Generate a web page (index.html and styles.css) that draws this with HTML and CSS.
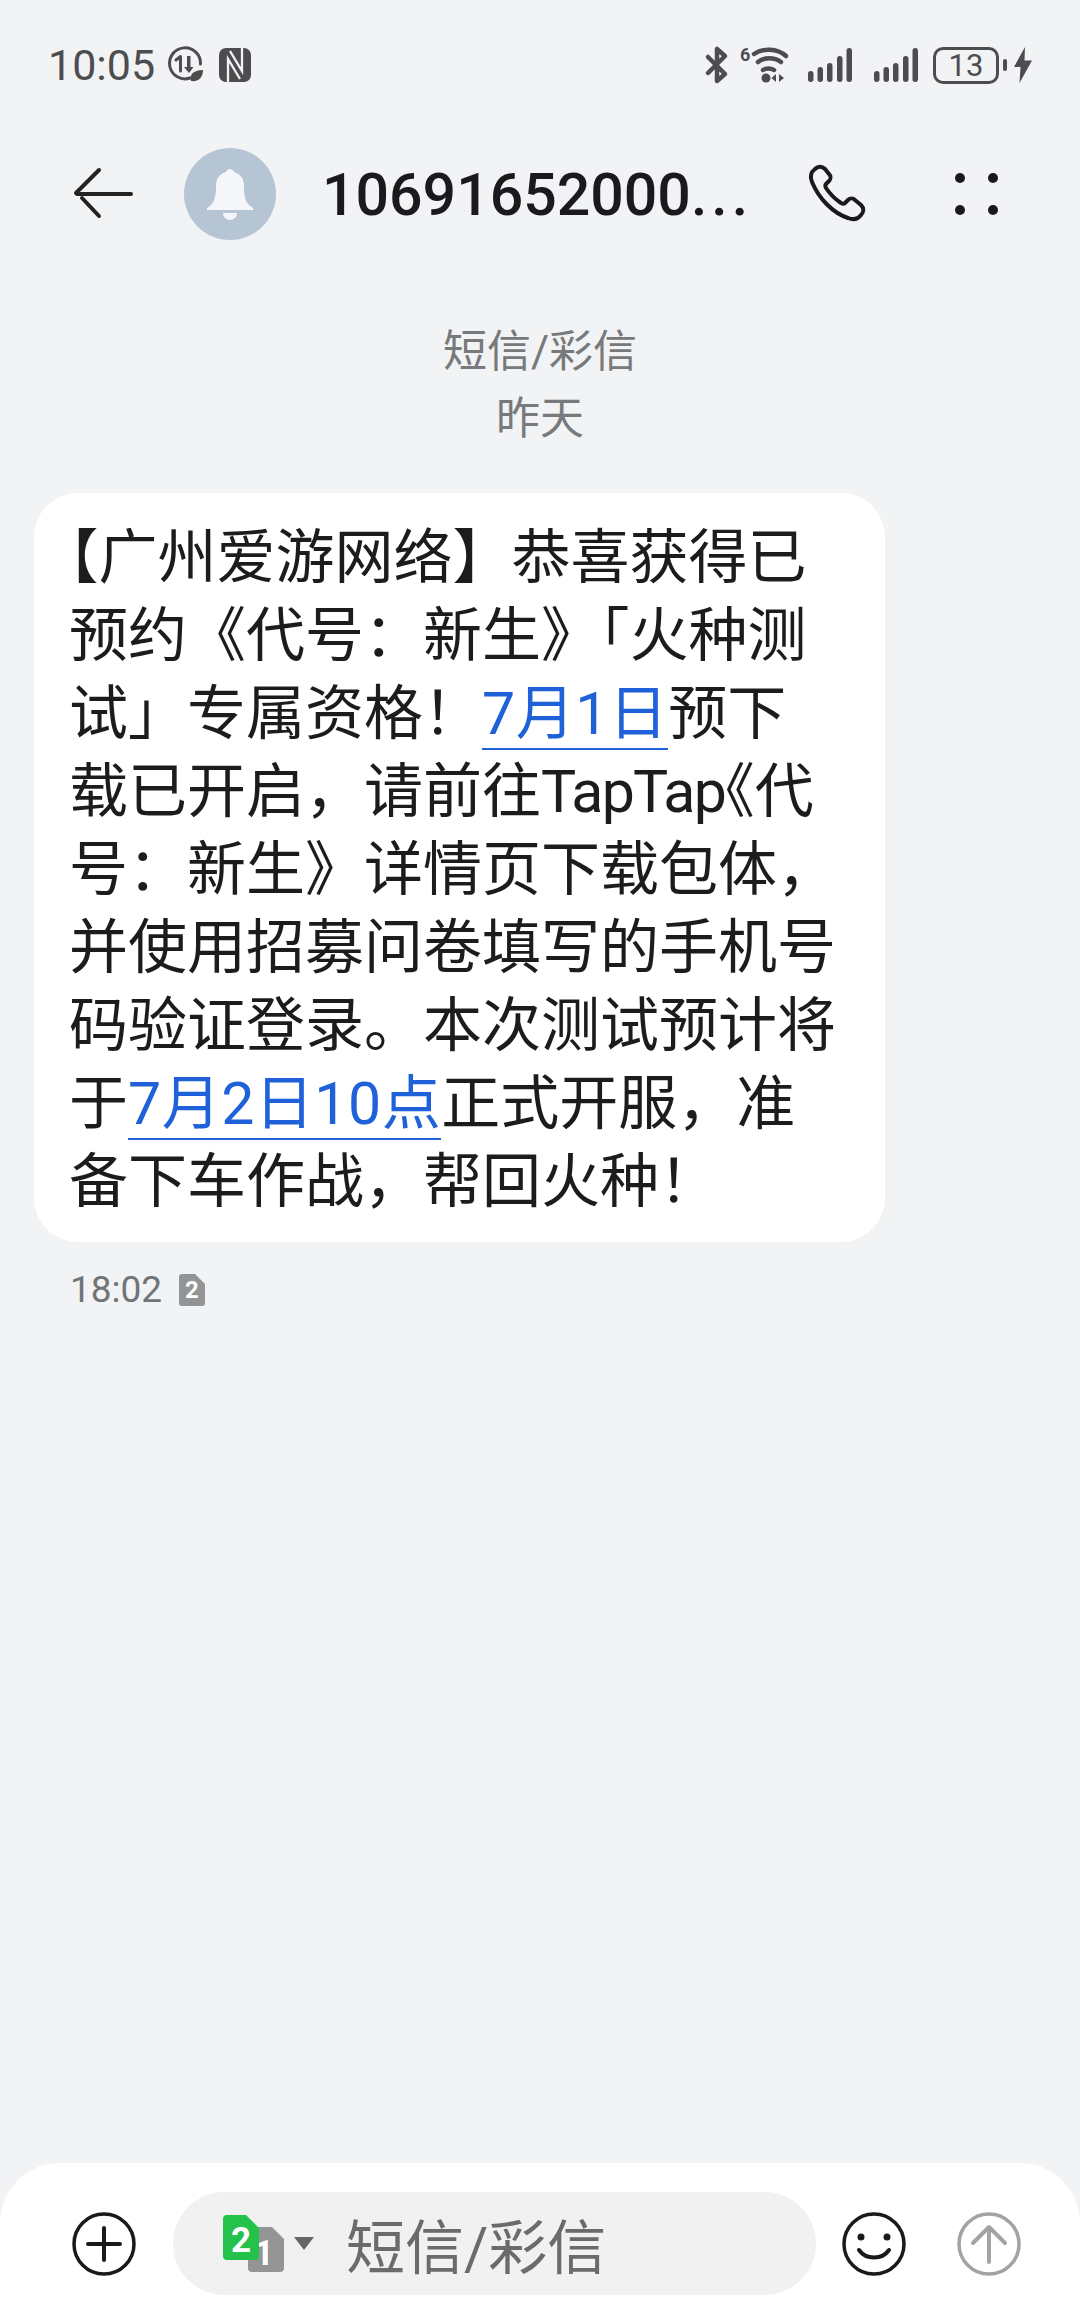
FILE: index.html
```html
<!DOCTYPE html>
<html lang="zh-CN">
<head>
<meta charset="UTF-8">
<meta name="viewport" content="width=device-width, initial-scale=1.0">
<link rel="stylesheet" href="styles.css">
<title>短信/彩信</title>
</head>
<body>
  <div class="status-bar">
    <div class="status-left">
      <span class="clock">10:05</span>
      <svg class="ic-data" viewBox="0 0 36 36" width="36" height="36">
        <path d="M23 31A15.500 15.500 0 1 1 33.500 17" fill="none" stroke="#4d4d4f" stroke-width="3" stroke-linecap="round"/>
        <path d="M9 13l4.500-3.500V24" fill="none" stroke="#4d4d4f" stroke-width="3" stroke-linecap="round" stroke-linejoin="round"/>
        <path d="M20 9v11h-3l5 6 4.500-6h-3V9z" fill="#4d4d4f"/>
        <path d="M24 34c-2-6 2-11 12-11 0 7-4 12-12 11z" fill="#4d4d4f"/>
      </svg>
      <svg class="ic-nfc" viewBox="0 0 32 34" width="32" height="34">
        <rect width="32" height="34" rx="7" fill="#4d4d4f"/>
        <path d="M9 34V11l12 20M23 0v23L11 3" fill="none" stroke="#f1f3f5" stroke-width="2.300"/>
      </svg>
    </div>
    <div class="status-right">
      <svg class="ic-bt" viewBox="0 0 24 38" width="24" height="38">
        <path d="M3 27L20 10 12 3v32l8-7-17-17" fill="none" stroke="#4d4d4f" stroke-width="4.500" stroke-linecap="round" stroke-linejoin="round"/>
      </svg>
      <svg class="ic-wifi" viewBox="0 0 50 38" width="50" height="38">
        <text x="2" y="15" class="wifi-six">6</text>
        <path d="M16 8C25 2 39 2 48 10" fill="none" stroke="#4d4d4f" stroke-width="4.500" stroke-linecap="round"/>
        <path d="M20 16c6-5 16-5 23 0" fill="none" stroke="#4d4d4f" stroke-width="4.500" stroke-linecap="round"/>
        <path d="M25 24c3-2 8-2 11 0" fill="none" stroke="#4d4d4f" stroke-width="4.500" stroke-linecap="round"/>
        <circle cx="28" cy="32" r="4.500" fill="#4d4d4f"/>
        <path d="M38 28v8l-4.500-4zM41 28v8l5-4z" fill="#4d4d4f"/>
      </svg>
      <svg class="ic-signal" viewBox="0 0 44 36" width="44" height="36">
        <rect x="0" y="24" width="5.500" height="11" rx="2.700" fill="#4d4d4f"/>
        <rect x="9.500" y="20" width="5.500" height="15" rx="2.700" fill="#4d4d4f"/>
        <rect x="19" y="16" width="5.500" height="19" rx="2.700" fill="#4d4d4f"/>
        <rect x="29" y="9" width="5.500" height="26" rx="2.700" fill="#4d4d4f"/>
        <rect x="38.500" y="1" width="5.500" height="34" rx="2.700" fill="#4d4d4f"/>
      </svg>
      <svg class="ic-signal ic-signal-two" viewBox="0 0 44 36" width="44" height="36">
        <rect x="0" y="24" width="5.500" height="11" rx="2.700" fill="#4d4d4f"/>
        <rect x="9.500" y="20" width="5.500" height="15" rx="2.700" fill="#4d4d4f"/>
        <rect x="19" y="16" width="5.500" height="19" rx="2.700" fill="#4d4d4f"/>
        <rect x="29" y="9" width="5.500" height="26" rx="2.700" fill="#4d4d4f"/>
        <rect x="38.500" y="1" width="5.500" height="34" rx="2.700" fill="#4d4d4f"/>
      </svg>
      <div class="battery"><span class="battery-num">13</span></div>
      <span class="battery-tip"></span>
      <svg class="ic-bolt" viewBox="0 0 18 36" width="18" height="36">
        <path d="M11 0L0 20h6.500L5.500 36 18 13.500h-7.500z" fill="#4d4d4f"/>
      </svg>
    </div>
  </div>

  <div class="top-bar">
    <svg class="ic-back" viewBox="0 0 60 54" width="60" height="54">
      <path d="M3 26L26 3M9 31L26 49M4 27h54" fill="none" stroke="#222" stroke-width="4" stroke-linecap="round"/>
    </svg>
    <div class="avatar">
      <svg viewBox="0 0 46 50" width="46" height="50">
        <path d="M23 2c2 0 3 1 4 3 7 2 10 7 10 14 0 8 1 15 5 19 1 1 3 2 4 3v2H0v-2c2-1 3-2 4-3 4-4 5-11 5-19 0-7 3-12 10-14 1-2 2-3 4-3z" fill="#f4f6f9" transform="translate(0 -2)"/>
        <path d="M16 44h14a7 7 0 0 1-14 0z" fill="#f4f6f9"/>
      </svg>
    </div>
    <div class="title">10691652000<span class="title-dots">...</span></div>
    <svg class="ic-phone" viewBox="0 0 60 60" width="60" height="60">
      <path d="M6 5c3-3 7-3 10 0l4 5c2 2 2 5 0 7l-3 3c-1 1-1 2 0 4 4 6 9 11 15 15 2 1 3 1 4 0l3-3c2-2 5-2 7 0l6 5c3 3 3 7 0 10-3 4-8 5-13 3C24 49 10 35 3 18 1 13 2 8 6 5z" fill="none" stroke="#1a1a1c" stroke-width="4" stroke-linejoin="round"/>
    </svg>
    <div class="more">
      <span class="dot"></span><span class="dot"></span><span class="dot"></span><span class="dot"></span>
    </div>
  </div>

  <div class="thread">
    <div class="thread-head">
      <div>短信/彩信</div>
      <div>昨天</div>
    </div>
    <div class="bubble"><span class="halt">【</span>广州爱游网络】恭喜获得已<br>预约《代号：新生》「火种测<br>试」专属资格！<a class="link">7月1日</a>预下<br>载已开启，请前往<span class="latin">TapTap</span><span class="halt">《</span>代<br>号：新生》详情页下载包体，<br>并使用招募问卷填写的手机号<br>码验证登录。本次测试预计将<br>于<a class="link">7月2日10点</a>正式开服，准<br>备下车作战，帮回火种！</div>
    <div class="msg-meta">
      <span>18:02</span>
      <svg viewBox="0 0 26 32" width="26" height="32">
        <path d="M3 0h13l10 10v19a3 3 0 0 1-3 3H3a3 3 0 0 1-3-3V3a3 3 0 0 1 3-3z" fill="#929496"/>
        <text x="13" y="24" class="sim-num sim-small">2</text>
      </svg>
    </div>
  </div>

  <div class="composer">
    <svg class="ic-round" viewBox="0 0 64 64" width="64" height="64">
      <circle cx="32" cy="32" r="30" fill="none" stroke="#1a1a1c" stroke-width="3.500"/>
      <path d="M32 16v32M16 32h32" stroke="#1a1a1c" stroke-width="4" stroke-linecap="round"/>
    </svg>
    <div class="input-pill">
      <svg class="ic-sim" viewBox="0 0 64 58" width="64" height="58">
        <path d="M30 12h20l12 12v29a4 4 0 0 1-4 4H30a4 4 0 0 1-4-4V16a4 4 0 0 1 4-4z" fill="#929496"/>
        <text x="42" y="50" class="sim-num sim-big">1</text>
        <path d="M5 0h19l13 13v28a4 4 0 0 1-4 4H5a4 4 0 0 1-4-4V4a4 4 0 0 1 4-4z" fill="#24c24a"/>
        <text x="19" y="37" class="sim-num sim-big">2</text>
      </svg>
      <span class="caret"></span>
      <span class="placeholder">短信/彩信</span>
    </div>
    <svg class="ic-round ic-smile" viewBox="0 0 64 64" width="64" height="64">
      <circle cx="32" cy="32" r="30" fill="none" stroke="#1a1a1c" stroke-width="3.500"/>
      <circle cx="19" cy="25" r="3.500" fill="#1a1a1c"/>
      <circle cx="45" cy="25" r="3.500" fill="#1a1a1c"/>
      <path d="M17 38c7 10 23 10 30 0" fill="none" stroke="#1a1a1c" stroke-width="4" stroke-linecap="round"/>
    </svg>
    <svg class="ic-round ic-send" viewBox="0 0 64 64" width="64" height="64">
      <circle cx="32" cy="32" r="30" fill="none" stroke="#a3a3a3" stroke-width="3.500"/>
      <path d="M32 50V16M16 31l16-16 16 16" fill="none" stroke="#a3a3a3" stroke-width="4" stroke-linecap="round" stroke-linejoin="round"/>
    </svg>
  </div>
</body>
</html>
```

FILE: styles.css
```css
* {
  box-sizing: border-box;
}
body {
  margin: 0;
  height: 2324px;
  display: flex;
  flex-direction: column;
  background-color: #f1f3f5;
  font-family: Roboto, "Noto Sans CJK SC", sans-serif;
  overflow: hidden;
}
svg {
  display: block;
  flex: none;
  overflow: visible;
}

/* status bar */
.status-bar {
  display: flex;
  align-items: center;
  justify-content: space-between;
  height: 64px;
  margin-top: 33px;
  padding: 0 48px;
  color: #4d4d4f;
}
.status-left {
  display: flex;
  align-items: center;
  gap: 16px;
}
.clock {
  font-size: 43px;
  margin-right: -4px;
}
.status-right {
  display: flex;
  align-items: center;
}
.ic-wifi {
  margin-left: 9px;
}
.ic-signal {
  margin-left: 20px;
}
.ic-signal-two {
  margin-left: 22px;
}
.battery {
  width: 66px;
  height: 37px;
  margin-left: 15px;
  border: 3px solid #4d4d4f;
  border-radius: 10px;
  display: flex;
  align-items: center;
  justify-content: center;
}
.battery-num {
  font-size: 31px;
  line-height: 1;
}
.battery-tip {
  width: 4px;
  height: 12px;
  margin-left: 4px;
  border-radius: 2px;
  background: #4d4d4f;
}
.ic-bolt {
  margin-left: 7px;
}
.wifi-six {
  font: 700 18px Roboto, sans-serif;
  fill: #4d4d4f;
}

/* top bar */
.top-bar {
  display: flex;
  align-items: center;
  height: 92px;
  margin-top: 51px;
  padding-left: 73px;
}
.avatar {
  width: 92px;
  height: 92px;
  margin-left: 51px;
  border-radius: 50%;
  background: #b6c5d4;
  display: flex;
  align-items: center;
  justify-content: center;
}
.title {
  width: 487px;
  margin-left: 46px;
  font-size: 59px;
  font-weight: 500;
  color: #1a1a1c;
  white-space: nowrap;
}
.title-dots {
  letter-spacing: 4px;
}
.more {
  display: grid;
  grid-template-columns: repeat(2, 10px);
  gap: 22px 23px;
  margin-left: 86px;
}
.dot {
  width: 10px;
  height: 10px;
  border-radius: 50%;
  background: #1a1a1c;
}

/* thread */
.thread {
  flex: 1;
  padding: 0 34px;
}
.thread-head {
  margin-top: 79px;
  text-align: center;
  font-size: 44px;
  line-height: 67px;
  color: #77797b;
}
.bubble {
  width: 851px;
  margin-top: 40px;
  padding: 26px 34px 21px 35px;
  background: #fff;
  border-radius: 44px;
  font-size: 59px;
  line-height: 78px;
  color: #1c1c1e;
  white-space: nowrap;
}
.halt {
  font-feature-settings: "halt";
}
.latin {
  letter-spacing: -1.7px;
}
.link {
  color: #1f61d8;
  border-bottom: 2px solid #1f61d8;
  letter-spacing: 0.5px;
}
.msg-meta {
  display: flex;
  align-items: center;
  gap: 17px;
  margin-top: 26px;
  padding-left: 36px;
  font-size: 37px;
  color: #727476;
}
.sim-num {
  fill: #fff;
  font-family: Roboto, sans-serif;
  font-weight: 700;
  text-anchor: middle;
}
.sim-small {
  font-size: 24px;
}
.sim-big {
  font-size: 35px;
}

/* composer */
.composer {
  display: flex;
  align-items: center;
  height: 161px;
  padding: 0 0 0 72px;
  background: #fff;
  border-radius: 60px 60px 0 0;
}
.input-pill {
  display: flex;
  align-items: center;
  width: 643px;
  height: 103px;
  margin-left: 37px;
  padding-left: 49px;
  border-radius: 52px;
  background: #f1f1f2;
}
.caret {
  width: 0;
  height: 0;
  margin: 0 0 0 8px;
  border-left: 10px solid transparent;
  border-right: 10px solid transparent;
  border-top: 13px solid #666;
}
.placeholder {
  margin-left: 32px;
  font-size: 59px;
  color: #6b6b6d;
}
.ic-smile {
  margin-left: 26px;
}
.ic-send {
  margin-left: 51px;
}
```
